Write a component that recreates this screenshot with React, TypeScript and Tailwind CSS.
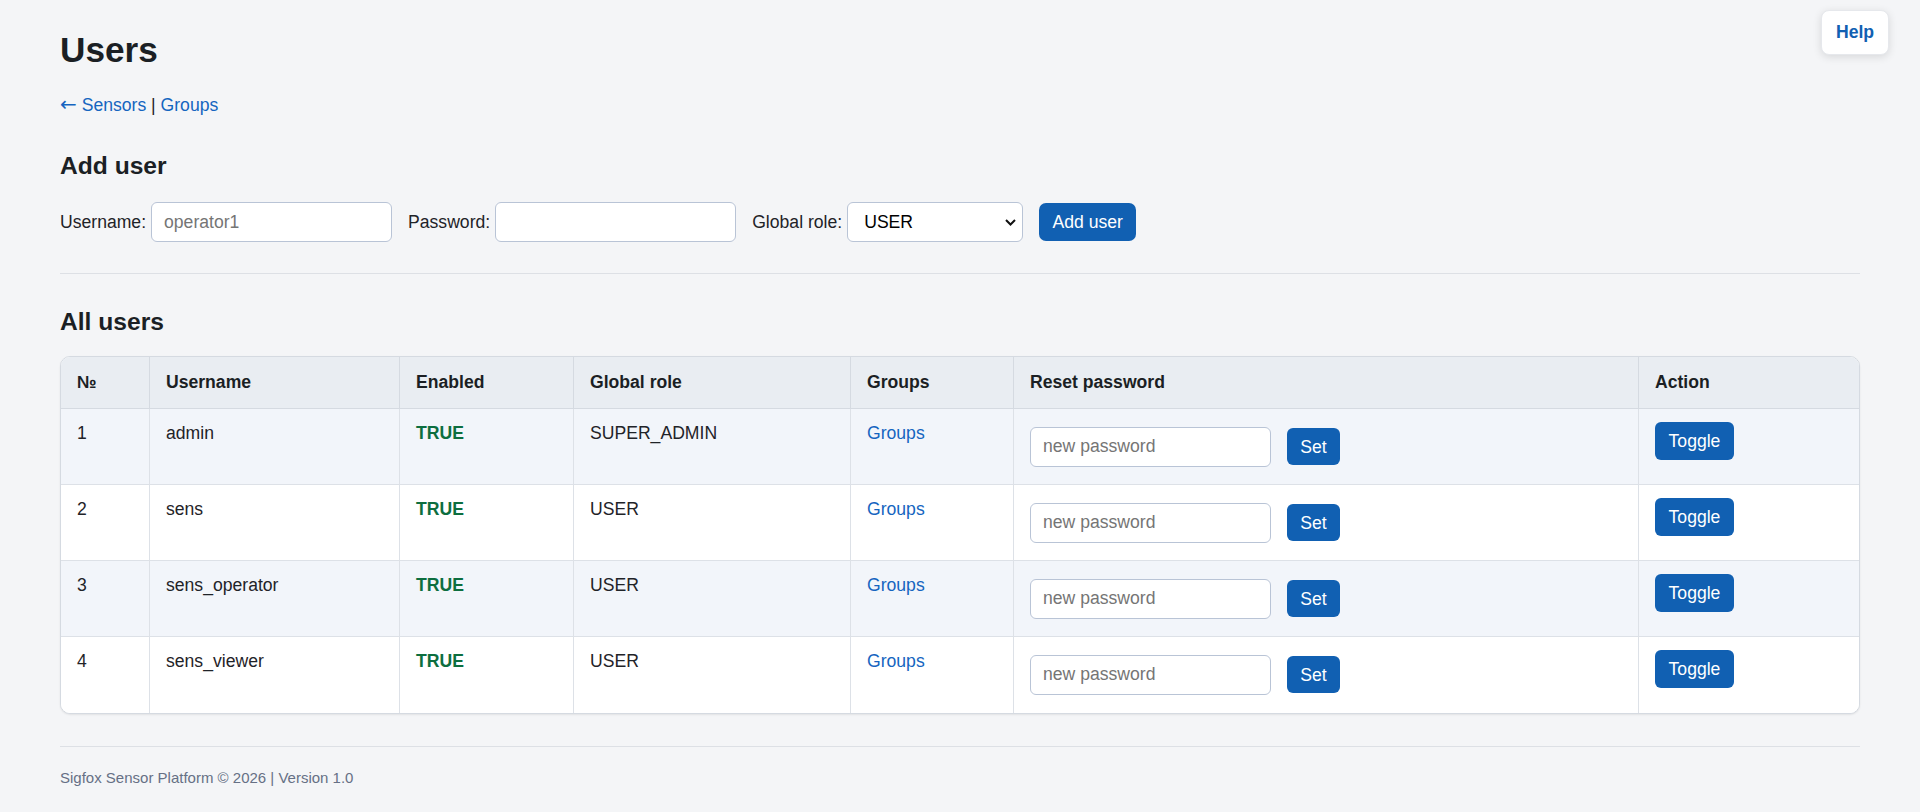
import React from "react"

type User = {
  id: number
  username: string
  enabled: boolean
  role: string
}

const users: User[] = [
  { id: 1, username: "admin", enabled: true, role: "SUPER_ADMIN" },
  { id: 2, username: "sens", enabled: true, role: "USER" },
  { id: 3, username: "sens_operator", enabled: true, role: "USER" },
  { id: 4, username: "sens_viewer", enabled: true, role: "USER" },
]

const headers = ["№", "Username", "Enabled", "Global role", "Groups", "Reset password", "Action"]

export default function App() {
  return (
    <div
      className="relative min-h-screen bg-[#f4f5f7] px-[60px] pt-[29.5px] pb-[30px] text-[17.6px] text-[#1f2328]"
      style={{ fontFamily: '"Liberation Sans", Arial, sans-serif' }}
    >
      {/* Help */}
      <button className="absolute top-[10px] right-[31px] h-[45px] w-[68px] rounded-[8px] border border-[#e6e8ec] bg-white text-[17.6px] font-bold text-[#1160b2] shadow-[0_2px_8px_rgba(0,0,0,0.12)]">
        Help
      </button>

      <h1 className="text-[35.2px] font-bold leading-[40px] text-[#1b1f24]">Users</h1>

      <p className="mt-[24px] h-[20px] leading-[20px]">
        <a href="#" className="text-[#1565c0]">
          <span className="font-['DejaVu_Sans',sans-serif] text-[20px] leading-none">←</span> Sensors
        </a>
        <span> | </span>
        <a href="#" className="text-[#1565c0]">Groups</a>
      </p>

      {/* Add user */}
      <h2 className="mt-[37.5px] text-[24.6px] font-bold leading-[30px] text-[#1b1f24]">Add user</h2>
      <form className="mt-[21px] flex h-[40px] items-center gap-[16px]" onSubmit={(e) => e.preventDefault()}>
        <label className="flex items-center">
          Username:
          <input
            type="text"
            placeholder="operator1"
            className="ml-[5px] h-[40px] w-[241px] rounded-[6px] border border-[#b9c4d6] bg-white px-[12px] text-[17.6px] placeholder-[#757575] outline-none"
          />
        </label>
        <label className="flex items-center">
          Password:
          <input
            type="password"
            className="ml-[5px] h-[40px] w-[241px] rounded-[6px] border border-[#b9c4d6] bg-white px-[12px] text-[17.6px] outline-none"
          />
        </label>
        <label className="flex items-center">
          Global role:
          <span className="relative ml-[5px]">
            <select
              defaultValue="USER"
              className="h-[40px] w-[176px] appearance-none rounded-[6px] border border-[#b9c4d6] bg-white pl-[16px] text-[17.6px] text-black outline-none"
            >
              <option value="USER">USER</option>
              <option value="SUPER_ADMIN">SUPER_ADMIN</option>
            </select>
            <svg
              className="pointer-events-none absolute top-[17px] right-[7px]"
              width="11"
              height="7"
              viewBox="0 0 11 7"
              fill="none"
            >
              <path d="M1 1l4.5 4.5L10 1" stroke="#111" strokeWidth="2" />
            </svg>
          </span>
        </label>
        <button className="h-[38px] w-[97px] rounded-[7px] bg-[#1160b2] text-[17.6px] text-white">Add user</button>
      </form>

      <hr className="mt-[31px] border-0 border-t border-[#dde0e5]" />

      {/* All users */}
      <h2 className="mt-[33px] text-[24.6px] font-bold leading-[30px] text-[#1b1f24]">All users</h2>
      <div className="mt-[18.5px] overflow-hidden rounded-[10px] border border-[#d5dae1] bg-white shadow-[0_1px_2px_rgba(0,0,0,0.08)]">
        <table className="w-full table-fixed border-separate border-spacing-0 leading-[20px]">
          <colgroup>
            <col className="w-[89px]" />
            <col className="w-[250px]" />
            <col className="w-[174px]" />
            <col className="w-[277px]" />
            <col className="w-[163px]" />
            <col className="w-[625px]" />
            <col />
          </colgroup>
          <thead>
            <tr>
              {headers.map((h, i) => (
                <th
                  key={h}
                  className={`border-b border-[#d5dae1] bg-[#e9edf2] px-[16px] py-[15.5px] text-left align-top font-bold text-[#1b1f24] ${
                    i < headers.length - 1 ? "border-r" : ""
                  }`}
                >
                  {h}
                </th>
              ))}
            </tr>
          </thead>
          <tbody>
            {users.map((u, r) => {
              const last = r === users.length - 1
              const rowBg = r % 2 === 0 ? "bg-[#f2f5fa]" : "bg-white"
              const cell = `border-[#dde1e7] px-[16px] align-top text-left ${last ? "" : "border-b"}`
              return (
                <tr key={u.id} className={`h-[76px] ${rowBg}`}>
                  <td className={`${cell} border-r pt-[14px]`}>{u.id}</td>
                  <td className={`${cell} border-r pt-[14px]`}>{u.username}</td>
                  <td className={`${cell} border-r pt-[14px] font-bold text-[#0d6e3f]`}>
                    {u.enabled ? "TRUE" : "FALSE"}
                  </td>
                  <td className={`${cell} border-r pt-[14px]`}>{u.role}</td>
                  <td className={`${cell} border-r pt-[14px]`}>
                    <a href="#" className="text-[#1565c0]">Groups</a>
                  </td>
                  <td className={`${cell} border-r pt-[14px]`}>
                    <div className="mt-[4px] flex items-center gap-[16px]">
                      <input
                        type="password"
                        placeholder="new password"
                        className="h-[40px] w-[241px] rounded-[6px] border border-[#b9c4d6] bg-white px-[12px] text-[17.6px] placeholder-[#757575] outline-none"
                      />
                      <button className="h-[37px] w-[53px] rounded-[6px] bg-[#1160b2] text-[17.6px] text-white">Set</button>
                    </div>
                  </td>
                  <td className={`${cell} pt-[13px]`}>
                    <button className="h-[38px] w-[79px] rounded-[6px] bg-[#1160b2] text-[17.6px] text-white">Toggle</button>
                  </td>
                </tr>
              )
            })}
          </tbody>
        </table>
      </div>

      <hr className="mt-[32px] border-0 border-t border-[#dde0e5]" />
      <footer className="mt-[22px] text-[15px] leading-[18px] text-[#667085]">
        Sigfox Sensor Platform © 2026 | Version 1.0
      </footer>
    </div>
  )
}
